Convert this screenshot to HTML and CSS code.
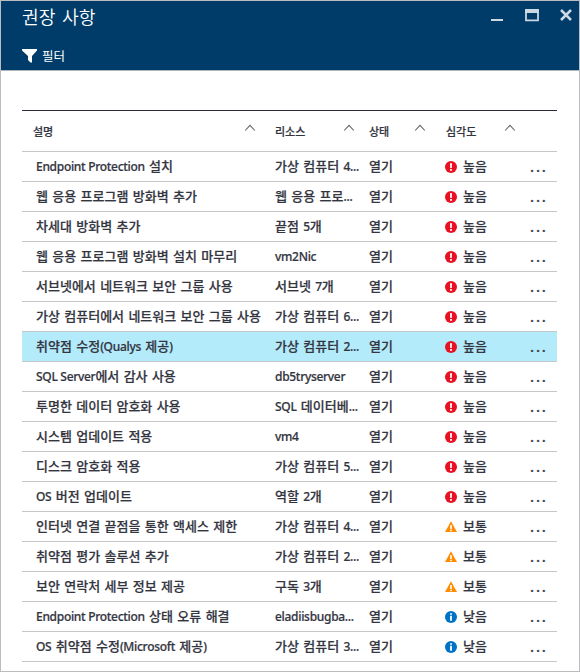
FILE: index.html
```html
<!DOCTYPE html>
<html lang="ko">
<head>
<meta charset="utf-8">
<title>권장 사항</title>
<link rel="stylesheet" href="styles.css">
</head>
<body>
<svg class="defs" aria-hidden="true">
  <symbol id="high" viewBox="0 0 12 12"><circle cx="6" cy="6" r="6" fill="#e81123"/><path d="M5 2.2h2L6.8 7H5.2z" fill="#fff"/><rect x="5.1" y="8" width="1.8" height="1.8" fill="#fff"/></symbol>
  <symbol id="medium" viewBox="0 0 12 12"><path d="M6 .2 12 11H0z" fill="#ff8c00"/><path d="M5.2 4h1.6v4.2H5.2zM5.2 9h1.6v1.2H5.2z" fill="#fff"/></symbol>
  <symbol id="low" viewBox="0 0 12 12"><circle cx="6" cy="6" r="6" fill="#0072c6"/><path d="M5.1 2.2h1.8v1.6H5.1zM5.1 4.8h1.8v5H5.1z" fill="#fff"/></symbol>
  <symbol id="sort" viewBox="0 0 12 8"><path d="M1.2 6.5 6 1.3l4.8 5.2" fill="none" stroke="#62656b" stroke-width="1.1"/></symbol>
</svg>
<main class="blade">
  <header class="blade-header">
    <div class="title-row">
      <h1>권장 사항</h1>
      <svg class="window-controls" width="84" height="14" viewBox="0 0 84 14" fill="none" stroke="#ccd8e2"><path d="M1 12h12" stroke-width="2"/><path d="M36 4.5v7.8h12V4.5" stroke-width="1.8"/><path d="M35 3h14" stroke-width="4"/><path d="m71 2 10 10m0-10L71 12" stroke-width="2.5"/></svg>
    </div>
    <div class="toolbar"><svg width="16" height="14" viewBox="0 0 16 14"><path d="M0 0h15v1.5L10 7v6.6H8.5L6 11V7L0 1.5z" fill="#fff"/></svg><span>필터</span></div>
  </header>
  <section class="grid">
    <div class="row head"><div>설명<svg><use href="#sort"/></svg></div><div>리소스<svg><use href="#sort"/></svg></div><div>상태<svg><use href="#sort"/></svg></div><div>심각도<svg><use href="#sort"/></svg></div></div>
    <div class="row"><div><span class="en">Endpoint Protection</span> 설치</div><div>가상 컴퓨터 <span class="en">4...</span></div><div>열기</div><div class="severity"><svg><use href="#high"/></svg><span>높음</span></div><div class="more">...</div></div>
    <div class="row"><div>웹 응용 프로그램 방화벽 추가</div><div>웹 응용 프로<span class="en">...</span></div><div>열기</div><div class="severity"><svg><use href="#high"/></svg><span>높음</span></div><div class="more">...</div></div>
    <div class="row"><div>차세대 방화벽 추가</div><div>끝점 <span class="en">5</span>개</div><div>열기</div><div class="severity"><svg><use href="#high"/></svg><span>높음</span></div><div class="more">...</div></div>
    <div class="row"><div>웹 응용 프로그램 방화벽 설치 마무리</div><div><span class="en">vm2Nic</span></div><div>열기</div><div class="severity"><svg><use href="#high"/></svg><span>높음</span></div><div class="more">...</div></div>
    <div class="row"><div>서브넷에서 네트워크 보안 그룹 사용</div><div>서브넷 <span class="en">7</span>개</div><div>열기</div><div class="severity"><svg><use href="#high"/></svg><span>높음</span></div><div class="more">...</div></div>
    <div class="row"><div>가상 컴퓨터에서 네트워크 보안 그룹 사용</div><div>가상 컴퓨터 <span class="en">6...</span></div><div>열기</div><div class="severity"><svg><use href="#high"/></svg><span>높음</span></div><div class="more">...</div></div>
    <div class="row selected"><div>취약점 수정<span class="en">(Qualys</span> 제공<span class="en">)</span></div><div>가상 컴퓨터 <span class="en">2...</span></div><div>열기</div><div class="severity"><svg><use href="#high"/></svg><span>높음</span></div><div class="more">...</div></div>
    <div class="row"><div><span class="en">SQL Server</span>에서 감사 사용</div><div><span class="en">db5tryserver</span></div><div>열기</div><div class="severity"><svg><use href="#high"/></svg><span>높음</span></div><div class="more">...</div></div>
    <div class="row"><div>투명한 데이터 암호화 사용</div><div><span class="en">SQL</span> 데이터베<span class="en">...</span></div><div>열기</div><div class="severity"><svg><use href="#high"/></svg><span>높음</span></div><div class="more">...</div></div>
    <div class="row"><div>시스템 업데이트 적용</div><div><span class="en">vm4</span></div><div>열기</div><div class="severity"><svg><use href="#high"/></svg><span>높음</span></div><div class="more">...</div></div>
    <div class="row"><div>디스크 암호화 적용</div><div>가상 컴퓨터 <span class="en">5...</span></div><div>열기</div><div class="severity"><svg><use href="#high"/></svg><span>높음</span></div><div class="more">...</div></div>
    <div class="row"><div><span class="en">OS</span> 버전 업데이트</div><div>역할 <span class="en">2</span>개</div><div>열기</div><div class="severity"><svg><use href="#high"/></svg><span>높음</span></div><div class="more">...</div></div>
    <div class="row"><div>인터넷 연결 끝점을 통한 액세스 제한</div><div>가상 컴퓨터 <span class="en">4...</span></div><div>열기</div><div class="severity"><svg><use href="#medium"/></svg><span>보통</span></div><div class="more">...</div></div>
    <div class="row"><div>취약점 평가 솔루션 추가</div><div>가상 컴퓨터 <span class="en">2...</span></div><div>열기</div><div class="severity"><svg><use href="#medium"/></svg><span>보통</span></div><div class="more">...</div></div>
    <div class="row"><div>보안 연락처 세부 정보 제공</div><div>구독 <span class="en">3</span>개</div><div>열기</div><div class="severity"><svg><use href="#medium"/></svg><span>보통</span></div><div class="more">...</div></div>
    <div class="row"><div><span class="en">Endpoint Protection</span> 상태 오류 해결</div><div><span class="en">eladiisbugba...</span></div><div>열기</div><div class="severity"><svg><use href="#low"/></svg><span>낮음</span></div><div class="more">...</div></div>
    <div class="row"><div><span class="en">OS</span> 취약점 수정<span class="en">(Microsoft</span> 제공<span class="en">)</span></div><div>가상 컴퓨터 <span class="en">3...</span></div><div>열기</div><div class="severity"><svg><use href="#low"/></svg><span>낮음</span></div><div class="more">...</div></div>
  </section>
</main>
</body>
</html>
```
FILE: styles.css
```css
* { box-sizing: border-box; }
body { margin: 0; background: #fff; color: #33353f; font-family: "Noto Sans CJK KR", sans-serif; }
.defs { display: none; }
.blade { width: 580px; height: 672px; border: 1px solid #bcbcbe; overflow: hidden; }
.blade-header { height: 70px; background: #003c6a; border-bottom: 1px solid #b0b5ba; color: #fff; padding: 0 5px 0 21px; }
.title-row { display: flex; justify-content: space-between; height: 44px; }
h1 { margin: 2px 0 0; font-size: 18.2px; line-height: 26px; font-weight: 350; word-spacing: 1.5px; }
.window-controls { margin-top: 7px; }
.toolbar { display: flex; align-items: center; gap: 4px; height: 21px; font-size: 12.5px; line-height: 21px; }
.grid { margin: 39px 22px 0 21px; border-top: 1px solid #2b2b3a; }
.row { display: grid; grid-template-columns: 239px 94px 76px 84px 1fr; height: 30px; padding-left: 14px; border-bottom: 1px solid #c6c7c9; font-size: 13px; line-height: 28px; font-weight: 500; white-space: nowrap; word-spacing: .7px; -webkit-text-stroke: .2px #33353f; }
.row.selected { background: #b3ebfb; }
.en { font-family: "Noto Sans", sans-serif; font-size: 12px; letter-spacing: -.3px; word-spacing: 0; }
.head { height: 41px; grid-template-columns: 242px 94px 78px 90px; padding-left: 11px; font-size: 11px; line-height: 41px; }
.head div { display: flex; justify-content: space-between; padding-right: 19px; }
.head div:nth-child(2) { padding-right: 14px; }
.head div:nth-child(n+3) { padding-right: 21px; }
.head div:nth-child(4) { margin-left: -1px; }
.head svg { width: 12px; height: 8px; margin-top: 13px; }
.severity { display: flex; align-items: flex-start; gap: 6px; }
.severity svg { width: 12px; height: 12px; margin-top: 9px; }
.more { margin-left: 1px; font-family: "Noto Sans", sans-serif; font-size: 15px; letter-spacing: 1.8px; line-height: 29px; }
```
